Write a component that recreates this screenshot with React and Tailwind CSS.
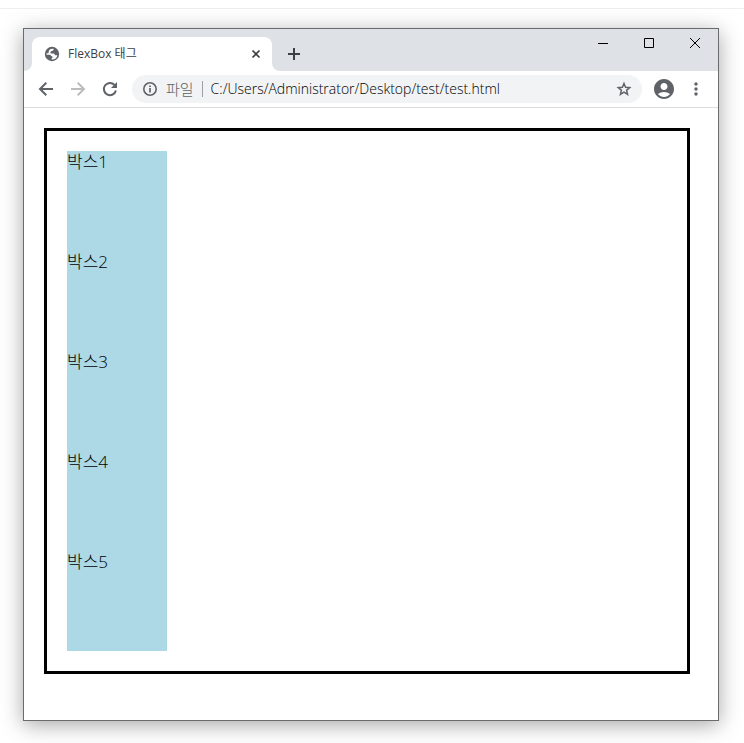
import React, { useState } from "react";
import { MdAccountCircle, MdMoreVert } from "react-icons/md";

const boxes = ["박스1", "박스2", "박스3", "박스4", "박스5"];

function GlobeIcon() {
  return (
    <svg className="size-4 text-[#5f6368]" viewBox="0 0 16 16" fill="none">
      <circle cx="8" cy="8" r="7.2" fill="currentColor" />
      <path
        d="M9.600 2.700C9.800 4.200 9 4.900 7.600 5 6.900 5.100 7.100 6.100 6.300 6.500 6 7.200 6.600 7.400 7.200 7.400H9.600C10.500 7.400 10.600 8.300 10.900 8.900 11.300 9.500 12.400 9.300 13.400 9.300A5.600 5.600 0 0 1 7.600 13.600V12.200C8.500 12 8.800 11.300 8.500 10.700 8.100 10 7.300 10.200 6.900 9.400 6.500 8.900 5.900 8.800 5.200 8.800H2.700A5.600 5.600 0 0 1 2.500 7.300L4.600 7.200C4.600 5.400 5 4.200 6.600 3.100A5.600 5.600 0 0 1 9.600 2.700Z"
        fill="#fff"
      />
    </svg>
  );
}

function BackIcon() {
  return (
    <svg className="size-5" viewBox="0 0 20 20" fill="none" stroke="currentColor" strokeWidth="2">
      <path d="M17 10H4.500M10.300 3.700L4 10l6.300 6.300" />
    </svg>
  );
}

function ForwardIcon() {
  return (
    <svg className="size-5" viewBox="0 0 20 20" fill="none" stroke="currentColor" strokeWidth="2">
      <path d="M3 10h12.500M9.700 3.700L16 10l-6.300 6.300" />
    </svg>
  );
}

function ReloadIcon() {
  return (
    <svg className="size-5" viewBox="0 0 20 20" fill="none">
      <path
        d="M15.900 11.500A6.100 6.100 0 1 1 14.300 5.700L15.300 6.800"
        stroke="currentColor"
        strokeWidth="2"
      />
      <path d="M17 3v6h-6Z" fill="currentColor" />
    </svg>
  );
}

function InfoIcon() {
  return (
    <svg className="size-4" viewBox="0 0 16 16" fill="none" stroke="currentColor">
      <circle cx="8" cy="8" r="6.2" strokeWidth="1.6" />
      <path d="M8 7v4.500M8 4.400v1.700" strokeWidth="1.7" />
    </svg>
  );
}

function StarIcon() {
  return (
    <svg className="size-4" viewBox="0 0 16 16" fill="none" stroke="currentColor">
      <path
        d="M8 2.500l1.600 3.800 4.100.35-3.100 2.700.95 4L8 11.200l-3.550 2.150.95-4-3.100-2.700 4.100-.35Z"
        strokeWidth="1.500"
      />
    </svg>
  );
}

// Esquinas curvas en la base de la pestaña
function TabFoot({ flip }) {
  return (
    <svg
      className={flip ? "size-2 self-end -scale-x-100" : "size-2 self-end"}
      viewBox="0 0 8 8"
    >
      <path d="M8 0v8H0a8 8 0 0 0 8-8Z" fill="#fff" />
    </svg>
  );
}

function TitleBar() {
  return (
    <div className="flex h-[42px] bg-[#dee1e6]">
      <TabFoot />
      <div className="mt-2 flex w-60 items-center rounded-t-lg bg-white pr-2 pl-3">
        <GlobeIcon />
        <span className="ml-2 flex-1 text-[12px] text-[#3c4043]">
          FlexBox 태그
        </span>
        <button aria-label="탭 닫기" className="flex size-4 items-center justify-center">
          <svg className="size-4" viewBox="0 0 16 16" stroke="#3c4043" strokeWidth="1.7">
            <path d="M4.500 4.500l7 7M11.500 4.500l-7 7" />
          </svg>
        </button>
      </div>
      <TabFoot flip />
      <button aria-label="새 탭" className="mt-2 flex w-7 items-center justify-center">
        <svg className="size-4" viewBox="0 0 16 16" stroke="#3c4043" strokeWidth="2">
          <path d="M8 2v12M2 8h12" />
        </svg>
      </button>
      <div className="ml-auto flex h-7 text-black">
        <button aria-label="최소화" className="flex w-[46px] items-center justify-center">
          <svg className="size-3" viewBox="0 0 12 12" fill="currentColor">
            <path d="M1 6h10v1H1z" />
          </svg>
        </button>
        <button aria-label="최대화" className="flex w-[46px] items-center justify-center">
          <svg className="size-3" viewBox="0 0 12 12" fill="none" stroke="currentColor">
            <path d="M1.500 1.500h9v9h-9z" />
          </svg>
        </button>
        <button aria-label="닫기" className="flex w-[46px] items-center justify-center">
          <svg className="size-3" viewBox="0 0 12 12" stroke="currentColor">
            <path d="M1 1l10 10M11 1L1 11" />
          </svg>
        </button>
      </div>
    </div>
  );
}

function Toolbar() {
  const [url, setUrl] = useState("C:/Users/Administrator/Desktop/test/test.html");

  return (
    <div className="flex h-[37px] items-center border-b border-[#dadce0] bg-white px-3 text-[#5f6368]">
      <div className="flex gap-3">
        <button aria-label="뒤로">
          <BackIcon />
        </button>
        <button aria-label="앞으로" className="text-[#babcbe]">
          <ForwardIcon />
        </button>
        <button aria-label="새로고침">
          <ReloadIcon />
        </button>
      </div>
      <div className="ml-3 flex h-7 min-w-0 flex-1 items-center rounded-full bg-[#f1f3f4] px-[10px]">
        <InfoIcon />
        <label htmlFor="url" className="ml-2 text-[15px] leading-5 font-light">
          파일
        </label>
        <span className="mx-2 h-4 w-px bg-[#9aa0a6]" />
        <input
          id="url"
          value={url}
          onChange={(e) => setUrl(e.target.value)}
          className="min-w-0 flex-1 bg-transparent text-[14px] leading-5 font-light text-black outline-none"
        />
        <button aria-label="북마크">
          <StarIcon />
        </button>
      </div>
      <button aria-label="프로필" className="ml-[10px]">
        <MdAccountCircle className="size-6" />
      </button>
      <button aria-label="메뉴" className="ml-[10px]">
        <MdMoreVert className="size-5" />
      </button>
    </div>
  );
}

function App() {
  return (
    <div className="bg-white pt-2 pb-[22px] font-['Open_Sans','Noto_Sans_CJK_KR',sans-serif]">
      <div className="border-t border-[#eeeeee]" />
      <div className="mt-[19px] mr-[25px] ml-[23px] border border-[#6b6b6b] bg-white shadow-[0_4px_20px_rgba(0,0,0,0.35)]">
        <TitleBar />
        <Toolbar />
        <div className="pt-5 pr-7 pb-[46px] pl-5">
          <div className="border-[3px] border-black p-5">
            {boxes.map((box) => (
              <div
                key={box}
                className="size-[100px] bg-[#add8e6] text-[17px] leading-[22px] font-light text-black"
              >
                {box}
              </div>
            ))}
          </div>
        </div>
      </div>
    </div>
  );
}

export default App;
